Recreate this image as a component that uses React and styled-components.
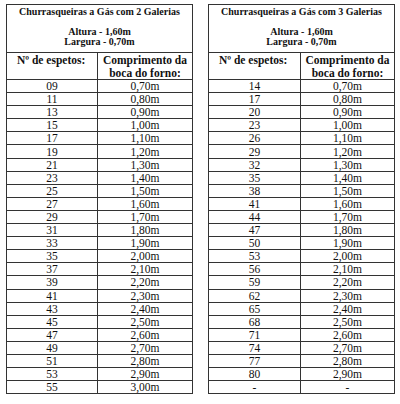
import React from "react";
import styled, { createGlobalStyle } from "styled-components";

const GlobalStyle = createGlobalStyle`
  html, body {
    margin: 0;
    padding: 0;
    background: #fff;
  }
  body {
    font-family: "Liberation Serif", "Times New Roman", serif;
    color: #111;
  }
`;

const fmt = (v) => v.toFixed(2).replace(".", ",") + "m";

const twoGalleries = Array.from({ length: 24 }, (_, i) => ({
  n: String(9 + i * 2).padStart(2, "0"),
  len: fmt(0.7 + i * 0.1),
}));

const threeGalleries = [
  ...Array.from({ length: 23 }, (_, i) => ({
    n: String(14 + i * 3),
    len: fmt(0.7 + i * 0.1),
  })),
  { n: "-", len: "-" },
];

const Page = styled.div`
  display: flex;
  gap: 15px;
  padding: 4px 0 0 6px;
`;

const Table = styled.table`
  width: 187px;
  border-collapse: collapse;
  table-layout: fixed;
  border: 1px solid #333;
`;

const TitleCell = styled.th`
  height: 45px;
  padding: 2px 0 0;
  border: 1px solid #333;
  vertical-align: top;
  font-size: 10px;
  font-weight: bold;
  line-height: 10px;
  text-align: center;
  white-space: nowrap;
`;

const TitleLine = styled.div`
  margin-bottom: ${(p) => (p.$gap ? "10px" : "0")};
`;

const HeadCell = styled.th`
  height: 25px;
  padding: 1px 0 0 ${(p) => (p.$left ? "10px" : "0")};
  border: 1px solid #333;
  font-size: 11.5px;
  font-weight: bold;
  line-height: 12.5px;
  text-align: ${(p) => (p.$left ? "left" : "center")};
  vertical-align: top;
  white-space: nowrap;
  overflow: hidden;
`;

const Cell = styled.td`
  height: 12.1px;
  padding: 0;
  border: 1px solid #333;
  font-size: 11.5px;
  line-height: 12px;
  text-align: center;
  overflow: hidden;
`;

const SizeTable = ({ galleries, rows, firstCol }) => (
  <Table>
    <colgroup>
      <col style={{ width: firstCol }} />
      <col />
    </colgroup>
    <thead>
      <tr>
        <TitleCell colSpan={2}>
          <TitleLine $gap>Churrasqueiras a Gás com {galleries} Galerias</TitleLine>
          <TitleLine>Altura - 1,60m</TitleLine>
          <TitleLine>Largura - 0,70m</TitleLine>
        </TitleCell>
      </tr>
      <tr>
        <HeadCell $left>Nº de espetos:</HeadCell>
        <HeadCell>
          Comprimento da
          <br />
          boca do forno:
        </HeadCell>
      </tr>
    </thead>
    <tbody>
      {rows.map((r, i) => (
        <tr key={i}>
          <Cell>{r.n}</Cell>
          <Cell>{r.len}</Cell>
        </tr>
      ))}
    </tbody>
  </Table>
);

export default function App() {
  return (
    <>
      <GlobalStyle />
      <Page>
        <SizeTable galleries={2} rows={twoGalleries} firstCol="91px" />
        <SizeTable galleries={3} rows={threeGalleries} firstCol="92px" />
      </Page>
    </>
  );
}
